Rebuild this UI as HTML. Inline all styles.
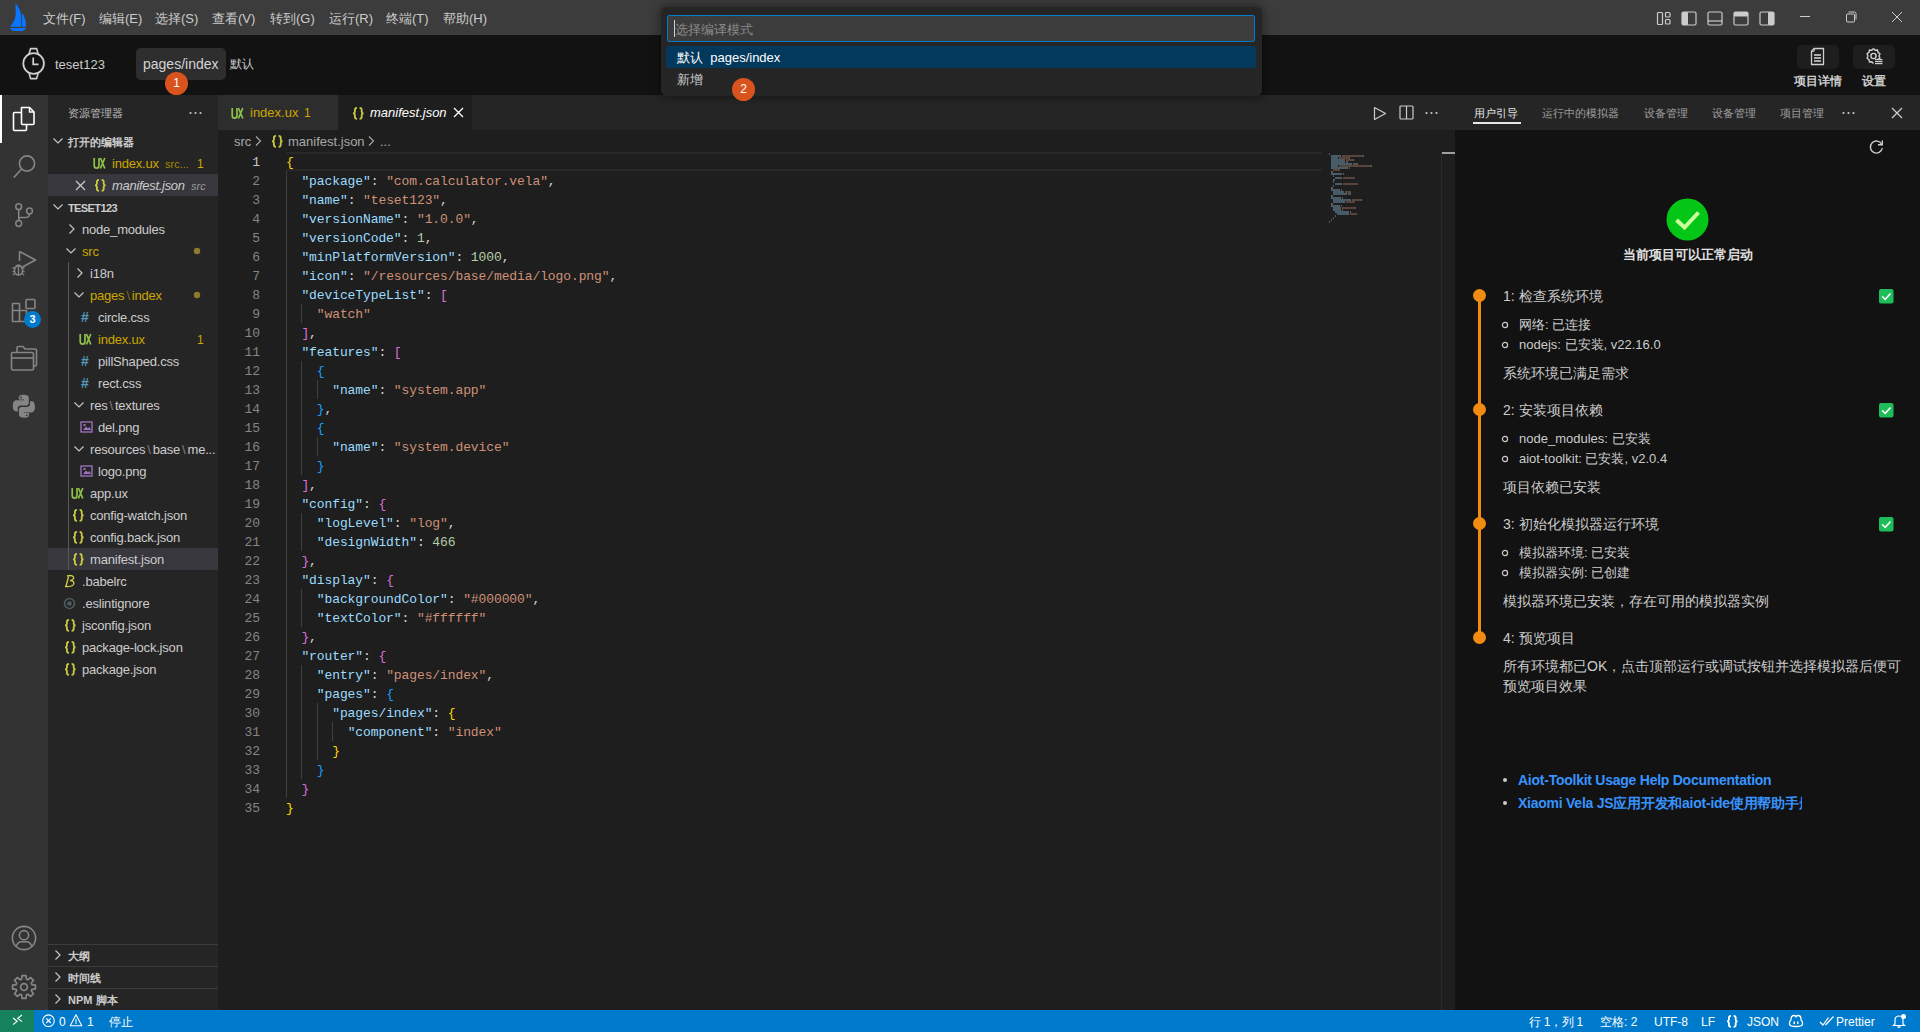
<!DOCTYPE html><html><head><meta charset="utf-8"><style>
*{margin:0;padding:0;box-sizing:border-box}
html,body{width:1920px;height:1032px;overflow:hidden;background:#1e1e1e;font-family:"Liberation Sans",sans-serif;font-size:13px;color:#cccccc}
.a{position:absolute;white-space:nowrap}
svg.i{position:absolute;overflow:visible}
.menu{top:10px;color:#cccccc;font-size:13px}
.badge{position:absolute;width:23px;height:23px;border-radius:50%;background:#d9531e;color:#fff;font-size:12px;text-align:center;line-height:23px}
.code{font-family:"Liberation Mono",monospace;font-size:13px;letter-spacing:-0.1px;line-height:19px;color:#d4d4d4}
.ln{font-family:"Liberation Mono",monospace;font-size:13px;line-height:19px;color:#858585;text-align:right;width:40px}
.k{color:#9cdcfe}.s{color:#ce9178}.n{color:#b5cea8}.b1{color:#ffd700}.b2{color:#da70d6}.b3{color:#179fff}
.row{height:22px;line-height:22px}
.guide{position:absolute;width:1px;background:#404040}
</style></head><body>
<div class="a" style="left:0px;top:0px;width:1920px;height:35px;background:#3c3c3c;"></div>
<div class="a" style="left:0px;top:35px;width:1920px;height:60px;background:#121212;"></div>
<div class="a" style="left:0px;top:95px;width:48px;height:915px;background:#333333;"></div>
<div class="a" style="left:48px;top:95px;width:170px;height:915px;background:#252526;"></div>
<div class="a" style="left:218px;top:95px;width:1237px;height:35px;background:#252526;"></div>
<div class="a" style="left:218px;top:130px;width:1237px;height:880px;background:#1e1e1e;"></div>
<div class="a" style="left:1455px;top:95px;width:465px;height:35px;background:#252526;"></div>
<div class="a" style="left:1455px;top:130px;width:465px;height:880px;background:#121212;"></div>
<div class="a" style="left:0px;top:1010px;width:1920px;height:22px;background:#007acc;"></div>
<div class="a" style="left:0px;top:1010px;width:34px;height:22px;background:#16825d;"></div>
<svg class="i" style="left:8px;top:2px;" width="22" height="32" viewBox="0 0 22 32">
<path d="M7.4 1 C10 4 12.3 8 13.1 12.5 L13.1 24.7 L2 24.7 C5.5 21 7.6 17 7.7 11 C7.8 7 7.5 4 7.4 1 Z" fill="#0a75ff"/>
<path d="M13.9 11.2 C16.6 14 18 18 18 24.7 L13.9 24.7 Z" fill="#0a75ff"/>
<path d="M2 25.9 L18 25.9 C17.4 28.3 15 29 10 29 C5 29 2.6 28.3 2 25.9 Z" fill="#0a75ff"/>
</svg>
<div class="a" style="left:43px;top:11px;color:#cccccc;font-size:13px;line-height:16px">文件(F)</div>
<div class="a" style="left:99px;top:11px;color:#cccccc;font-size:13px;line-height:16px">编辑(E)</div>
<div class="a" style="left:155px;top:11px;color:#cccccc;font-size:13px;line-height:16px">选择(S)</div>
<div class="a" style="left:212px;top:11px;color:#cccccc;font-size:13px;line-height:16px">查看(V)</div>
<div class="a" style="left:270px;top:11px;color:#cccccc;font-size:13px;line-height:16px">转到(G)</div>
<div class="a" style="left:329px;top:11px;color:#cccccc;font-size:13px;line-height:16px">运行(R)</div>
<div class="a" style="left:386px;top:11px;color:#cccccc;font-size:13px;line-height:16px">终端(T)</div>
<div class="a" style="left:443px;top:11px;color:#cccccc;font-size:13px;line-height:16px">帮助(H)</div>
<svg class="i" style="left:1656px;top:11px;" width="16" height="15" viewBox="0 0 16 15"><rect x="1.5" y="1.5" width="5" height="12" rx="1" fill="none" stroke="#cccccc" stroke-width="1.2"/>
<rect x="9.5" y="1.5" width="4.5" height="4.5" rx="1" fill="none" stroke="#cccccc" stroke-width="1.2"/>
<rect x="9.5" y="8.5" width="4.5" height="4.5" rx="1" fill="none" stroke="#cccccc" stroke-width="1.2"/></svg>
<svg class="i" style="left:1681px;top:11px;" width="16" height="15" viewBox="0 0 16 15"><rect x="1" y="1" width="14" height="13" rx="1.5" fill="none" stroke="#cccccc" stroke-width="1.2"/><rect x="1" y="1" width="6" height="13" rx="1" fill="#cccccc"/></svg>
<svg class="i" style="left:1707px;top:11px;" width="16" height="15" viewBox="0 0 16 15"><rect x="1" y="1" width="14" height="13" rx="1.5" fill="none" stroke="#cccccc" stroke-width="1.2"/><line x1="1" y1="10" x2="15" y2="10" stroke="#cccccc" stroke-width="1.2"/></svg>
<svg class="i" style="left:1733px;top:11px;" width="16" height="15" viewBox="0 0 16 15"><rect x="1" y="1" width="14" height="13" rx="1.5" fill="none" stroke="#cccccc" stroke-width="1.2"/><rect x="1" y="1" width="14" height="4.5" rx="1" fill="#cccccc"/></svg>
<svg class="i" style="left:1759px;top:11px;" width="16" height="15" viewBox="0 0 16 15"><rect x="1" y="1" width="14" height="13" rx="1.5" fill="none" stroke="#cccccc" stroke-width="1.2"/><rect x="9" y="1" width="6" height="13" rx="1" fill="#cccccc"/></svg>
<svg class="i" style="left:1799px;top:10px;" width="13" height="13" viewBox="0 0 13 13"><line x1="1" y1="6.5" x2="11" y2="6.5" stroke="#cccccc" stroke-width="1"/></svg>
<svg class="i" style="left:1845px;top:11px;" width="13" height="13" viewBox="0 0 13 13"><rect x="1.5" y="3" width="8" height="8" rx="1" fill="none" stroke="#cccccc" stroke-width="1"/><path d="M3.5 1 H9.5 Q11 1 11 2.5 V8.5" fill="none" stroke="#cccccc" stroke-width="1"/></svg>
<svg class="i" style="left:1891px;top:11px;" width="12" height="12" viewBox="0 0 12 12"><path d="M1 1 L11 11 M11 1 L1 11" stroke="#cccccc" stroke-width="1"/></svg>
<svg class="i" style="left:21px;top:47px;" width="26" height="34" viewBox="0 0 26 34"><circle cx="12.6" cy="16.5" r="10.3" fill="none" stroke="#cfcfcf" stroke-width="1.8"/>
<path d="M8 7 L9.6 1.6 H15.6 L17.2 7" fill="none" stroke="#cfcfcf" stroke-width="1.6" stroke-linejoin="round"/>
<path d="M8 26 L9.6 31.6 H15.6 L17.2 26" fill="none" stroke="#cfcfcf" stroke-width="1.6" stroke-linejoin="round"/>
<path d="M12.2 10.5 V17.3 H17.5" fill="none" stroke="#cfcfcf" stroke-width="1.7"/></svg>
<div class="a" style="left:55px;top:57px;font-size:13px;line-height:15px;color:#cccccc">teset123</div>
<div class="a" style="left:136px;top:48px;width:90px;height:32px;background:#2e2e2e;border-radius:5px"></div>
<div class="a" style="left:143px;top:56px;font-size:14px;line-height:16px;color:#d4d4d4">pages/index</div>
<div class="a" style="left:230px;top:57px;font-size:12px;line-height:15px;color:#cccccc">默认</div>
<div class="badge" style="left:165px;top:72px">1</div>
<div class="a" style="left:1797px;top:45px;width:42px;height:24px;background:#1e1e1e;border-radius:5px"></div>
<div class="a" style="left:1853px;top:45px;width:42px;height:24px;background:#1e1e1e;border-radius:5px"></div>
<svg class="i" style="left:1810px;top:47px;" width="16" height="20" viewBox="0 0 16 20"><path d="M4.2 1.5 H13.5 V17.5 H1.5 V4.2 Z" fill="none" stroke="#cfcfcf" stroke-width="1.3" stroke-linejoin="round"/>
<path d="M1.5 4.2 L4.2 4.2 L4.2 1.5" fill="none" stroke="#cfcfcf" stroke-width="1"/>
<rect x="4" y="7.2" width="7" height="1.6" fill="#cfcfcf"/><rect x="4" y="10.2" width="7" height="1.6" fill="#cfcfcf"/><rect x="4" y="13.2" width="7" height="1.6" fill="#cfcfcf"/></svg>
<svg class="i" style="left:1865px;top:47px;" width="20" height="20" viewBox="0 0 20 20"><path d="M8.5 1.5 L10.2 3.2 L12.6 3 L13 5.4 L15 6.8 L14 9 L15 11 L13 12.3" fill="none" stroke="#cfcfcf" stroke-width="1.4" stroke-linejoin="round"/>
<path d="M8.5 1.5 L6.8 3.2 L4.4 3 L4 5.4 L2 6.8 L3 9 L2 11.2 L4 12.6 L4.4 15 L6.8 14.8 L8.5 16.5" fill="none" stroke="#cfcfcf" stroke-width="1.4" stroke-linejoin="round"/>
<circle cx="8.5" cy="9" r="2.6" fill="none" stroke="#cfcfcf" stroke-width="1.4"/>
<rect x="10" y="12" width="7.5" height="1.2" fill="#cfcfcf"/><rect x="10" y="14" width="7.5" height="1.2" fill="#cfcfcf"/><rect x="10" y="16" width="7.5" height="1.2" fill="#cfcfcf"/></svg>
<div class="a" style="left:1794px;top:74px;font-size:12px;line-height:14px;color:#cccccc;font-weight:bold">项目详情</div>
<div class="a" style="left:1862px;top:74px;font-size:12px;line-height:14px;color:#cccccc;font-weight:bold">设置</div>
<div class="a" style="left:0px;top:95px;width:2px;height:48px;background:#ffffff;"></div>
<svg class="i" style="left:12px;top:106px;" width="24" height="26" viewBox="0 0 24 26"><path d="M9.5 1.5 H17.5 L22 6 V17.5 Q22 18.5 21 18.5 H10.5 Q9.5 18.5 9.5 17.5 Z" fill="none" stroke="#fff" stroke-width="1.6" stroke-linejoin="round"/>
<path d="M17.5 1.5 V6 H22" fill="none" stroke="#fff" stroke-width="1.4"/>
<path d="M9.5 6.5 H2.5 Q1.5 6.5 1.5 7.5 V23.5 Q1.5 24.5 2.5 24.5 H13.5 Q14.5 24.5 14.5 23.5 V18.5" fill="none" stroke="#fff" stroke-width="1.6"/></svg>
<svg class="i" style="left:12px;top:154px;" width="26" height="26" viewBox="0 0 26 26"><circle cx="15" cy="9.5" r="7.6" fill="none" stroke="#858585" stroke-width="1.6"/><line x1="9.6" y1="15" x2="1.8" y2="23.5" stroke="#858585" stroke-width="1.8"/></svg>
<svg class="i" style="left:14px;top:202px;" width="20" height="26" viewBox="0 0 20 26"><circle cx="4.7" cy="4.7" r="2.9" fill="none" stroke="#858585" stroke-width="1.5"/>
<circle cx="15.5" cy="9" r="2.9" fill="none" stroke="#858585" stroke-width="1.5"/>
<circle cx="4.7" cy="21.5" r="2.9" fill="none" stroke="#858585" stroke-width="1.5"/>
<path d="M4.7 7.6 V18.6 M15.5 11.9 Q15.5 15.5 11 15.5 H7 Q4.7 15.5 4.7 17.5" fill="none" stroke="#858585" stroke-width="1.5"/></svg>
<svg class="i" style="left:11px;top:249px;" width="28" height="28" viewBox="0 0 28 28"><path d="M8.5 2.5 L24.5 11 L11.5 18" fill="none" stroke="#858585" stroke-width="1.6" stroke-linejoin="round"/>
<path d="M8.5 2.5 V12" fill="none" stroke="#858585" stroke-width="1.6"/>
<ellipse cx="7.5" cy="21.5" rx="4" ry="4.5" fill="none" stroke="#858585" stroke-width="1.5"/>
<path d="M4.5 17.5 Q7.5 14.5 10.5 17.5 M1.5 19 H4 M11 19 H13.5 M1.5 22.5 H3.5 M11.5 22.5 H13.5 M1.8 26 L4 24.5 M13.2 26 L11 24.5 M7.5 18 V26" fill="none" stroke="#858585" stroke-width="1.3"/></svg>
<svg class="i" style="left:11px;top:298px;" width="26" height="26" viewBox="0 0 26 26"><path d="M1.5 5.5 H8.5 V12.5 H15.5 V23.5 H1.5 Z M1.5 12.5 H8.5 V23.5" fill="none" stroke="#858585" stroke-width="1.6" stroke-linejoin="round"/>
<rect x="15" y="1.5" width="9" height="9" rx="1" fill="none" stroke="#858585" stroke-width="1.6"/></svg>
<div class="a" style="left:24px;top:311px;width:17px;height:17px;border-radius:50%;background:#007acc;color:#fff;font-size:11px;font-weight:bold;text-align:center;line-height:17px">3</div>
<svg class="i" style="left:10px;top:345px;" width="28" height="27" viewBox="0 0 28 27"><path d="M1.5 9 Q1.5 7.5 3 7.5 H22 Q23.5 7.5 23.5 9 V23.5 Q23.5 25 22 25 H3 Q1.5 25 1.5 23.5 Z" fill="none" stroke="#858585" stroke-width="1.6"/>
<path d="M1.5 13 H23.5" fill="none" stroke="#858585" stroke-width="1.6"/>
<path d="M7 7.5 V3 Q7 1.5 8.5 1.5 H13 L15 4 H25 Q26.5 4 26.5 5.5 V19.5 Q26.5 21 25 21 H23.5" fill="none" stroke="#858585" stroke-width="1.6"/></svg>
<svg class="i" style="left:12px;top:394px;" width="24" height="25" viewBox="0 0 24 25"><path d="M11.8 0.8 C6.5 0.8 6.8 3.1 6.8 3.1 V5.5 H11.9 V6.2 H4.3 C4.3 6.2 0.8 5.8 0.8 11.8 C0.8 17.6 3.9 17.4 3.9 17.4 H5.8 V14.6 C5.8 14.6 5.7 11.6 8.8 11.6 H13.9 C13.9 11.6 16.8 11.6 16.8 8.8 V4 C16.8 4 17.2 0.8 11.8 0.8 Z M9 2.4 A0.9 0.9 0 1 1 9 4.2 A0.9 0.9 0 1 1 9 2.4 Z" fill="#858585"/>
<path d="M12 23.8 C17.3 23.8 17 21.5 17 21.5 V19.1 H11.9 V18.4 H19.5 C19.5 18.4 23 18.8 23 12.8 C23 7 19.9 7.2 19.9 7.2 H18 V10 C18 10 18.1 13 15 13 H9.9 C9.9 13 7 13 7 15.8 V20.6 C7 20.6 6.6 23.8 12 23.8 Z M14.8 22.2 A0.9 0.9 0 1 1 14.8 20.4 A0.9 0.9 0 1 1 14.8 22.2 Z" fill="#858585"/></svg>
<svg class="i" style="left:10px;top:924px;" width="28" height="28" viewBox="0 0 28 28"><circle cx="14" cy="14" r="11.6" fill="none" stroke="#858585" stroke-width="1.6"/><circle cx="14" cy="11.2" r="4.6" fill="none" stroke="#858585" stroke-width="1.6"/>
<path d="M6.3 22.6 Q7.5 17.8 12 17.8 H16 Q20.5 17.8 21.7 22.6" fill="none" stroke="#858585" stroke-width="1.6"/></svg>
<svg class="i" style="left:10px;top:972.5px;" width="28" height="28" viewBox="0 0 28 28"><path d="M21.83 11.58 L25.43 12.04 L25.43 15.96 L21.83 16.42 L21.25 17.83 L23.47 20.70 L20.70 23.47 L17.83 21.25 L16.42 21.83 L15.96 25.43 L12.04 25.43 L11.58 21.83 L10.17 21.25 L7.30 23.47 L4.53 20.70 L6.75 17.83 L6.17 16.42 L2.57 15.96 L2.57 12.04 L6.17 11.58 L6.75 10.17 L4.53 7.30 L7.30 4.53 L10.17 6.75 L11.58 6.17 L12.04 2.57 L15.96 2.57 L16.42 6.17 L17.83 6.75 L20.70 4.53 L23.47 7.30 L21.25 10.17 Z" fill="none" stroke="#858585" stroke-width="1.7" stroke-linejoin="round"/><circle cx="14" cy="14" r="3.4" fill="none" stroke="#858585" stroke-width="1.7"/></svg>
<div class="a" style="left:68px;top:106px;font-size:11px;line-height:15px;color:#bbbbbb">资源管理器</div>
<svg class="i" style="left:189px;top:111px;" width="14" height="4" viewBox="0 0 14 4"><circle cx="1.5" cy="2" r="1.1" fill="#c5c5c5"/><circle cx="6.5" cy="2" r="1.1" fill="#c5c5c5"/><circle cx="11.5" cy="2" r="1.1" fill="#c5c5c5"/></svg>
<svg class="i" style="left:52px;top:136px;" width="12" height="10" viewBox="0 0 12 10"><path d="M1.5 2.5 L6 7 L10.5 2.5" fill="none" stroke="#c5c5c5" stroke-width="1.2"/></svg>
<div class="a" style="left:68px;top:135px;font-size:11px;line-height:15px;color:#cccccc;font-weight:bold">打开的编辑器</div>
<svg class="i" style="left:93px;top:157px;" width="13" height="13" viewBox="0 0 13 13"><path d="M1.2 1 V8.2 Q1.2 11.2 3.6 11.2 Q6 11.2 6 8.2 V1" fill="none" stroke="#8dc149" stroke-width="1.7"/><path d="M7.4 1 L11.8 11.5 M11.8 1 L7.4 11.5" fill="none" stroke="#8dc149" stroke-width="1.7"/></svg>
<div class="a" style="left:112px;top:156px;font-size:13px;line-height:16px;letter-spacing:-0.2px;color:#cca700">index.ux</div>
<div class="a" style="left:165px;top:157px;font-size:11px;line-height:15px;color:#a38a00">src...</div>
<div class="a" style="left:197px;top:156px;font-size:12px;line-height:16px;color:#cca700">1</div>
<div class="a" style="left:48px;top:174px;width:170px;height:22px;background:#37373d;"></div>
<svg class="i" style="left:75px;top:180px;" width="11" height="11" viewBox="0 0 11 11"><path d="M1 1 L10 10 M10 1 L1 10" stroke="#cccccc" stroke-width="1.2"/></svg>
<svg class="i" style="left:93px;top:179px;" width="15" height="13" viewBox="0 0 15 13"><path d="M6 0.9 Q3.9 0.9 3.9 3 V4.8 Q3.9 6 2.2 6.3 Q3.9 6.6 3.9 7.8 V9.7 Q3.9 11.8 6 11.8 M8.6 0.9 Q10.7 0.9 10.7 3 V4.8 Q10.7 6 12.4 6.3 Q10.7 6.6 10.7 7.8 V9.7 Q10.7 11.8 8.6 11.8" fill="none" stroke="#cbcb41" stroke-width="1.8"/></svg>
<div class="a" style="left:112px;top:178px;font-size:13px;line-height:16px;color:#cccccc;font-style:italic;letter-spacing:-0.3px">manifest.json</div>
<div class="a" style="left:191px;top:179px;font-size:11px;line-height:15px;color:#999999;font-style:italic">src</div>
<svg class="i" style="left:52px;top:202px;" width="12" height="10" viewBox="0 0 12 10"><path d="M1.5 2.5 L6 7 L10.5 2.5" fill="none" stroke="#c5c5c5" stroke-width="1.2"/></svg>
<div class="a" style="left:68px;top:201px;font-size:11px;line-height:15px;color:#cccccc;font-weight:bold;letter-spacing:-0.6px">TESET123</div>
<svg class="i" style="left:67px;top:223px;" width="10" height="12" viewBox="0 0 10 12"><path d="M2.5 1.5 L7 6 L2.5 10.5" fill="none" stroke="#c5c5c5" stroke-width="1.2"/></svg>
<div class="a" style="left:82px;top:222px;font-size:13px;line-height:16px;color:#cccccc;letter-spacing:-0.2px">node_modules</div>
<svg class="i" style="left:65px;top:246px;" width="12" height="10" viewBox="0 0 12 10"><path d="M1.5 2.5 L6 7 L10.5 2.5" fill="none" stroke="#c5c5c5" stroke-width="1.2"/></svg>
<div class="a" style="left:82px;top:244px;font-size:13px;line-height:16px;color:#cca700;letter-spacing:-0.2px">src</div>
<svg class="i" style="left:193px;top:247px;" width="8" height="8" viewBox="0 0 8 8"><circle cx="4" cy="4" r="3.2" fill="#8b7b2b"/></svg>
<div class="a" style="left:68px;top:262px;width:1px;height:286px;background:#585858;"></div>
<svg class="i" style="left:75px;top:267px;" width="10" height="12" viewBox="0 0 10 12"><path d="M2.5 1.5 L7 6 L2.5 10.5" fill="none" stroke="#c5c5c5" stroke-width="1.2"/></svg>
<div class="a" style="left:90px;top:266px;font-size:13px;line-height:16px;color:#cccccc;letter-spacing:-0.2px">i18n</div>
<svg class="i" style="left:73px;top:290px;" width="12" height="10" viewBox="0 0 12 10"><path d="M1.5 2.5 L6 7 L10.5 2.5" fill="none" stroke="#c5c5c5" stroke-width="1.2"/></svg>
<div class="a" style="left:90px;top:288px;font-size:13px;line-height:16px;color:#cca700;letter-spacing:-0.2px">pages<span style="opacity:0.55;margin:0 2px">\</span>index</div>
<svg class="i" style="left:193px;top:291px;" width="8" height="8" viewBox="0 0 8 8"><circle cx="4" cy="4" r="3.2" fill="#8b7b2b"/></svg>
<div class="a" style="left:81px;top:309px;font-family:'Liberation Sans';font-size:14px;line-height:16px;color:#519aba;font-weight:bold">#</div>
<div class="a" style="left:98px;top:310px;font-size:13px;line-height:16px;color:#cccccc;letter-spacing:-0.2px">circle.css</div>
<svg class="i" style="left:79px;top:333px;" width="13" height="13" viewBox="0 0 13 13"><path d="M1.2 1 V8.2 Q1.2 11.2 3.6 11.2 Q6 11.2 6 8.2 V1" fill="none" stroke="#8dc149" stroke-width="1.7"/><path d="M7.4 1 L11.8 11.5 M11.8 1 L7.4 11.5" fill="none" stroke="#8dc149" stroke-width="1.7"/></svg>
<div class="a" style="left:98px;top:332px;font-size:13px;line-height:16px;color:#cca700;letter-spacing:-0.2px">index.ux</div>
<div class="a" style="left:197px;top:332px;font-size:12px;line-height:16px;color:#cca700">1</div>
<div class="a" style="left:81px;top:353px;font-family:'Liberation Sans';font-size:14px;line-height:16px;color:#519aba;font-weight:bold">#</div>
<div class="a" style="left:98px;top:354px;font-size:13px;line-height:16px;color:#cccccc;letter-spacing:-0.2px">pillShaped.css</div>
<div class="a" style="left:81px;top:375px;font-family:'Liberation Sans';font-size:14px;line-height:16px;color:#519aba;font-weight:bold">#</div>
<div class="a" style="left:98px;top:376px;font-size:13px;line-height:16px;color:#cccccc;letter-spacing:-0.2px">rect.css</div>
<svg class="i" style="left:73px;top:400px;" width="12" height="10" viewBox="0 0 12 10"><path d="M1.5 2.5 L6 7 L10.5 2.5" fill="none" stroke="#c5c5c5" stroke-width="1.2"/></svg>
<div class="a" style="left:90px;top:398px;font-size:13px;line-height:16px;color:#cccccc;letter-spacing:-0.2px">res<span style="opacity:0.55;margin:0 2px">\</span>textures</div>
<svg class="i" style="left:80px;top:421px;" width="13" height="12" viewBox="0 0 13 12"><rect x="1" y="1" width="11" height="10" fill="none" stroke="#a074c4" stroke-width="1.3"/><path d="M3 9 L6 5.5 L8 7.5 L9.5 6 L11 9 Z" fill="#a074c4"/><rect x="3.5" y="3" width="2" height="2" fill="#a074c4"/></svg>
<div class="a" style="left:98px;top:420px;font-size:13px;line-height:16px;color:#cccccc;letter-spacing:-0.2px">del.png</div>
<svg class="i" style="left:73px;top:444px;" width="12" height="10" viewBox="0 0 12 10"><path d="M1.5 2.5 L6 7 L10.5 2.5" fill="none" stroke="#c5c5c5" stroke-width="1.2"/></svg>
<div class="a" style="left:90px;top:442px;font-size:13px;line-height:16px;color:#cccccc;letter-spacing:-0.2px">resources<span style="opacity:0.55;margin:0 2px">\</span>base<span style="opacity:0.55;margin:0 2px">\</span>me...</div>
<svg class="i" style="left:80px;top:465px;" width="13" height="12" viewBox="0 0 13 12"><rect x="1" y="1" width="11" height="10" fill="none" stroke="#a074c4" stroke-width="1.3"/><path d="M3 9 L6 5.5 L8 7.5 L9.5 6 L11 9 Z" fill="#a074c4"/><rect x="3.5" y="3" width="2" height="2" fill="#a074c4"/></svg>
<div class="a" style="left:98px;top:464px;font-size:13px;line-height:16px;color:#cccccc;letter-spacing:-0.2px">logo.png</div>
<svg class="i" style="left:71px;top:487px;" width="13" height="13" viewBox="0 0 13 13"><path d="M1.2 1 V8.2 Q1.2 11.2 3.6 11.2 Q6 11.2 6 8.2 V1" fill="none" stroke="#8dc149" stroke-width="1.7"/><path d="M7.4 1 L11.8 11.5 M11.8 1 L7.4 11.5" fill="none" stroke="#8dc149" stroke-width="1.7"/></svg>
<div class="a" style="left:90px;top:486px;font-size:13px;line-height:16px;color:#cccccc;letter-spacing:-0.2px">app.ux</div>
<svg class="i" style="left:71px;top:509px;" width="15" height="13" viewBox="0 0 15 13"><path d="M6 0.9 Q3.9 0.9 3.9 3 V4.8 Q3.9 6 2.2 6.3 Q3.9 6.6 3.9 7.8 V9.7 Q3.9 11.8 6 11.8 M8.6 0.9 Q10.7 0.9 10.7 3 V4.8 Q10.7 6 12.4 6.3 Q10.7 6.6 10.7 7.8 V9.7 Q10.7 11.8 8.6 11.8" fill="none" stroke="#cbcb41" stroke-width="1.8"/></svg>
<div class="a" style="left:90px;top:508px;font-size:13px;line-height:16px;color:#cccccc;letter-spacing:-0.2px">config-watch.json</div>
<svg class="i" style="left:71px;top:531px;" width="15" height="13" viewBox="0 0 15 13"><path d="M6 0.9 Q3.9 0.9 3.9 3 V4.8 Q3.9 6 2.2 6.3 Q3.9 6.6 3.9 7.8 V9.7 Q3.9 11.8 6 11.8 M8.6 0.9 Q10.7 0.9 10.7 3 V4.8 Q10.7 6 12.4 6.3 Q10.7 6.6 10.7 7.8 V9.7 Q10.7 11.8 8.6 11.8" fill="none" stroke="#cbcb41" stroke-width="1.8"/></svg>
<div class="a" style="left:90px;top:530px;font-size:13px;line-height:16px;color:#cccccc;letter-spacing:-0.2px">config.back.json</div>
<div class="a" style="left:48px;top:548px;width:170px;height:22px;background:#37373d;"></div>
<div class="a" style="left:68px;top:548px;width:1px;height:22px;background:#585858;"></div>
<svg class="i" style="left:71px;top:553px;" width="15" height="13" viewBox="0 0 15 13"><path d="M6 0.9 Q3.9 0.9 3.9 3 V4.8 Q3.9 6 2.2 6.3 Q3.9 6.6 3.9 7.8 V9.7 Q3.9 11.8 6 11.8 M8.6 0.9 Q10.7 0.9 10.7 3 V4.8 Q10.7 6 12.4 6.3 Q10.7 6.6 10.7 7.8 V9.7 Q10.7 11.8 8.6 11.8" fill="none" stroke="#cbcb41" stroke-width="1.8"/></svg>
<div class="a" style="left:90px;top:552px;font-size:13px;line-height:16px;color:#cccccc;letter-spacing:-0.2px">manifest.json</div>
<svg class="i" style="left:63px;top:574px;" width="14" height="14" viewBox="0 0 14 14"><path d="M4 2 Q9 0.5 10.5 3 Q11.5 5.5 7 6.5 Q12 7 10.5 10.5 Q9 13 2 12.5 M5.5 2.5 L3 12.5" fill="none" stroke="#cbcb41" stroke-width="1.4"/></svg>
<div class="a" style="left:82px;top:574px;font-size:13px;line-height:16px;color:#cccccc;letter-spacing:-0.2px">.babelrc</div>
<svg class="i" style="left:63px;top:597px;" width="13" height="13" viewBox="0 0 13 13"><circle cx="6.5" cy="6.5" r="5" fill="none" stroke="#4d5a5e" stroke-width="1.6"/><circle cx="6.5" cy="6.5" r="2.3" fill="#4d5a5e"/></svg>
<div class="a" style="left:82px;top:596px;font-size:13px;line-height:16px;color:#cccccc;letter-spacing:-0.2px">.eslintignore</div>
<svg class="i" style="left:63px;top:619px;" width="15" height="13" viewBox="0 0 15 13"><path d="M6 0.9 Q3.9 0.9 3.9 3 V4.8 Q3.9 6 2.2 6.3 Q3.9 6.6 3.9 7.8 V9.7 Q3.9 11.8 6 11.8 M8.6 0.9 Q10.7 0.9 10.7 3 V4.8 Q10.7 6 12.4 6.3 Q10.7 6.6 10.7 7.8 V9.7 Q10.7 11.8 8.6 11.8" fill="none" stroke="#cbcb41" stroke-width="1.8"/></svg>
<div class="a" style="left:82px;top:618px;font-size:13px;line-height:16px;color:#cccccc;letter-spacing:-0.2px">jsconfig.json</div>
<svg class="i" style="left:63px;top:641px;" width="15" height="13" viewBox="0 0 15 13"><path d="M6 0.9 Q3.9 0.9 3.9 3 V4.8 Q3.9 6 2.2 6.3 Q3.9 6.6 3.9 7.8 V9.7 Q3.9 11.8 6 11.8 M8.6 0.9 Q10.7 0.9 10.7 3 V4.8 Q10.7 6 12.4 6.3 Q10.7 6.6 10.7 7.8 V9.7 Q10.7 11.8 8.6 11.8" fill="none" stroke="#cbcb41" stroke-width="1.8"/></svg>
<div class="a" style="left:82px;top:640px;font-size:13px;line-height:16px;color:#cccccc;letter-spacing:-0.2px">package-lock.json</div>
<svg class="i" style="left:63px;top:663px;" width="15" height="13" viewBox="0 0 15 13"><path d="M6 0.9 Q3.9 0.9 3.9 3 V4.8 Q3.9 6 2.2 6.3 Q3.9 6.6 3.9 7.8 V9.7 Q3.9 11.8 6 11.8 M8.6 0.9 Q10.7 0.9 10.7 3 V4.8 Q10.7 6 12.4 6.3 Q10.7 6.6 10.7 7.8 V9.7 Q10.7 11.8 8.6 11.8" fill="none" stroke="#cbcb41" stroke-width="1.8"/></svg>
<div class="a" style="left:82px;top:662px;font-size:13px;line-height:16px;color:#cccccc;letter-spacing:-0.2px">package.json</div>
<div class="a" style="left:48px;top:944px;width:170px;height:1px;background:#3c3c3c;"></div>
<div class="a" style="left:48px;top:966px;width:170px;height:1px;background:#3c3c3c;"></div>
<div class="a" style="left:48px;top:988px;width:170px;height:1px;background:#3c3c3c;"></div>
<svg class="i" style="left:53px;top:949px;" width="10" height="12" viewBox="0 0 10 12"><path d="M2.5 1.5 L7 6 L2.5 10.5" fill="none" stroke="#c5c5c5" stroke-width="1.2"/></svg>
<div class="a" style="left:68px;top:948px;font-size:11px;line-height:16px;color:#cccccc;font-weight:bold">大纲</div>
<svg class="i" style="left:53px;top:971px;" width="10" height="12" viewBox="0 0 10 12"><path d="M2.5 1.5 L7 6 L2.5 10.5" fill="none" stroke="#c5c5c5" stroke-width="1.2"/></svg>
<div class="a" style="left:68px;top:970px;font-size:11px;line-height:16px;color:#cccccc;font-weight:bold">时间线</div>
<svg class="i" style="left:53px;top:993px;" width="10" height="12" viewBox="0 0 10 12"><path d="M2.5 1.5 L7 6 L2.5 10.5" fill="none" stroke="#c5c5c5" stroke-width="1.2"/></svg>
<div class="a" style="left:68px;top:992px;font-size:11px;line-height:16px;color:#cccccc;font-weight:bold">NPM 脚本</div>
<div class="a" style="left:218px;top:95px;width:120px;height:35px;background:#2d2d2d;"></div>
<div class="a" style="left:338px;top:95px;width:134px;height:35px;background:#1e1e1e;"></div>
<svg class="i" style="left:231px;top:107px;" width="13" height="13" viewBox="0 0 13 13"><path d="M1.2 1 V8.2 Q1.2 11.2 3.6 11.2 Q6 11.2 6 8.2 V1" fill="none" stroke="#8dc149" stroke-width="1.7"/><path d="M7.4 1 L11.8 11.5 M11.8 1 L7.4 11.5" fill="none" stroke="#8dc149" stroke-width="1.7"/></svg>
<div class="a" style="left:250px;top:105px;font-size:13px;line-height:16px;color:#cca700">index.ux</div>
<div class="a" style="left:304px;top:105px;font-size:12px;line-height:16px;color:#cca700">1</div>
<svg class="i" style="left:351px;top:107px;" width="15" height="13" viewBox="0 0 15 13"><path d="M6 0.9 Q3.9 0.9 3.9 3 V4.8 Q3.9 6 2.2 6.3 Q3.9 6.6 3.9 7.8 V9.7 Q3.9 11.8 6 11.8 M8.6 0.9 Q10.7 0.9 10.7 3 V4.8 Q10.7 6 12.4 6.3 Q10.7 6.6 10.7 7.8 V9.7 Q10.7 11.8 8.6 11.8" fill="none" stroke="#cbcb41" stroke-width="1.8"/></svg>
<div class="a" style="left:370px;top:105px;font-size:13px;line-height:16px;color:#ffffff;font-style:italic">manifest.json</div>
<svg class="i" style="left:453px;top:107px;" width="11" height="11" viewBox="0 0 11 11"><path d="M1 1 L10 10 M10 1 L1 10" stroke="#ffffff" stroke-width="1.3"/></svg>
<svg class="i" style="left:1373px;top:106px;" width="14" height="15" viewBox="0 0 14 15"><path d="M1.5 1.5 L12.5 7.5 L1.5 13.5 Z" fill="none" stroke="#cccccc" stroke-width="1.2" stroke-linejoin="round"/></svg>
<svg class="i" style="left:1399px;top:105px;" width="15" height="15" viewBox="0 0 15 15"><rect x="1" y="1" width="13" height="13" rx="1" fill="none" stroke="#cccccc" stroke-width="1.2"/><line x1="7.5" y1="1" x2="7.5" y2="14" stroke="#cccccc" stroke-width="1.2"/></svg>
<svg class="i" style="left:1425px;top:111px;" width="14" height="4" viewBox="0 0 14 4"><circle cx="1.5" cy="2" r="1.1" fill="#cccccc"/><circle cx="6.5" cy="2" r="1.1" fill="#cccccc"/><circle cx="11.5" cy="2" r="1.1" fill="#cccccc"/></svg>
<div class="a" style="left:234px;top:134px;font-size:13px;line-height:16px;color:#a9a9a9">src</div>
<svg class="i" style="left:254px;top:135px;" width="9" height="12" viewBox="0 0 9 12"><path d="M2 1.5 L6.5 6 L2 10.5" fill="none" stroke="#a9a9a9" stroke-width="1.1"/></svg>
<svg class="i" style="left:270px;top:135px;" width="15" height="13" viewBox="0 0 15 13"><path d="M6 0.9 Q3.9 0.9 3.9 3 V4.8 Q3.9 6 2.2 6.3 Q3.9 6.6 3.9 7.8 V9.7 Q3.9 11.8 6 11.8 M8.6 0.9 Q10.7 0.9 10.7 3 V4.8 Q10.7 6 12.4 6.3 Q10.7 6.6 10.7 7.8 V9.7 Q10.7 11.8 8.6 11.8" fill="none" stroke="#cbcb41" stroke-width="1.8"/></svg>
<div class="a" style="left:288px;top:134px;font-size:13px;line-height:16px;color:#a9a9a9">manifest.json</div>
<svg class="i" style="left:367px;top:135px;" width="9" height="12" viewBox="0 0 9 12"><path d="M2 1.5 L6.5 6 L2 10.5" fill="none" stroke="#a9a9a9" stroke-width="1.1"/></svg>
<div class="a" style="left:380px;top:134px;font-size:13px;line-height:16px;color:#a9a9a9">...</div>
<div class="a" style="left:286px;top:152px;width:1036px;height:2px;background:#282828;"></div>
<div class="a" style="left:286px;top:169px;width:1036px;height:2px;background:#282828;"></div>
<div class="guide" style="left:286.0px;top:171px;height:627px;background:#404040"></div>
<div class="guide" style="left:301.4px;top:304px;height:19px;background:#404040"></div>
<div class="guide" style="left:301.4px;top:361px;height:114px;background:#404040"></div>
<div class="guide" style="left:301.4px;top:513px;height:38px;background:#404040"></div>
<div class="guide" style="left:301.4px;top:589px;height:38px;background:#404040"></div>
<div class="guide" style="left:301.4px;top:665px;height:114px;background:#404040"></div>
<div class="guide" style="left:316.8px;top:380px;height:19px;background:#404040"></div>
<div class="guide" style="left:316.8px;top:437px;height:19px;background:#404040"></div>
<div class="guide" style="left:316.8px;top:703px;height:57px;background:#404040"></div>
<div class="guide" style="left:332.2px;top:722px;height:19px;background:#404040"></div>
<div class="a code" style="left:286px;top:153px;white-space:pre"><span class="b1">{</span>
  <span class="k">&quot;package&quot;</span>: <span class="s">&quot;com.calculator.vela&quot;</span>,
  <span class="k">&quot;name&quot;</span>: <span class="s">&quot;teset123&quot;</span>,
  <span class="k">&quot;versionName&quot;</span>: <span class="s">&quot;1.0.0&quot;</span>,
  <span class="k">&quot;versionCode&quot;</span>: <span class="n">1</span>,
  <span class="k">&quot;minPlatformVersion&quot;</span>: <span class="n">1000</span>,
  <span class="k">&quot;icon&quot;</span>: <span class="s">&quot;/resources/base/media/logo.png&quot;</span>,
  <span class="k">&quot;deviceTypeList&quot;</span>: <span class="b2">[</span>
    <span class="s">&quot;watch&quot;</span>
  <span class="b2">]</span>,
  <span class="k">&quot;features&quot;</span>: <span class="b2">[</span>
    <span class="b3">{</span>
      <span class="k">&quot;name&quot;</span>: <span class="s">&quot;system.app&quot;</span>
    <span class="b3">}</span>,
    <span class="b3">{</span>
      <span class="k">&quot;name&quot;</span>: <span class="s">&quot;system.device&quot;</span>
    <span class="b3">}</span>
  <span class="b2">]</span>,
  <span class="k">&quot;config&quot;</span>: <span class="b2">{</span>
    <span class="k">&quot;logLevel&quot;</span>: <span class="s">&quot;log&quot;</span>,
    <span class="k">&quot;designWidth&quot;</span>: <span class="n">466</span>
  <span class="b2">}</span>,
  <span class="k">&quot;display&quot;</span>: <span class="b2">{</span>
    <span class="k">&quot;backgroundColor&quot;</span>: <span class="s">&quot;#000000&quot;</span>,
    <span class="k">&quot;textColor&quot;</span>: <span class="s">&quot;#ffffff&quot;</span>
  <span class="b2">}</span>,
  <span class="k">&quot;router&quot;</span>: <span class="b2">{</span>
    <span class="k">&quot;entry&quot;</span>: <span class="s">&quot;pages/index&quot;</span>,
    <span class="k">&quot;pages&quot;</span>: <span class="b3">{</span>
      <span class="k">&quot;pages/index&quot;</span>: <span class="b1">{</span>
        <span class="k">&quot;component&quot;</span>: <span class="s">&quot;index&quot;</span>
      <span class="b1">}</span>
    <span class="b3">}</span>
  <span class="b2">}</span>
<span class="b1">}</span></div>
<div class="a ln" style="left:220px;top:153px;white-space:pre">1
2
3
4
5
6
7
8
9
10
11
12
13
14
15
16
17
18
19
20
21
22
23
24
25
26
27
28
29
30
31
32
33
34
35</div>
<div class="a ln" style="left:220px;top:153px;color:#c6c6c6;background:#1e1e1e;height:19px">1</div>
<svg class="i" style="left:1329px;top:153px;shape-rendering:crispEdges" width="120" height="72" viewBox="0 0 120 72"><rect x="0" y="0" width="1" height="2" fill="#d4d4d4" opacity="0.33"/><rect x="2" y="2" width="1" height="2" fill="#9cdcfe" opacity="0.33"/><rect x="3" y="2" width="1" height="2" fill="#9cdcfe" opacity="0.33"/><rect x="4" y="2" width="1" height="2" fill="#9cdcfe" opacity="0.33"/><rect x="5" y="2" width="1" height="2" fill="#9cdcfe" opacity="0.33"/><rect x="6" y="2" width="1" height="2" fill="#9cdcfe" opacity="0.33"/><rect x="7" y="2" width="1" height="2" fill="#9cdcfe" opacity="0.33"/><rect x="8" y="2" width="1" height="2" fill="#9cdcfe" opacity="0.33"/><rect x="9" y="2" width="1" height="2" fill="#9cdcfe" opacity="0.33"/><rect x="10" y="2" width="1" height="2" fill="#9cdcfe" opacity="0.33"/><rect x="11" y="2" width="1" height="2" fill="#d4d4d4" opacity="0.33"/><rect x="13" y="2" width="1" height="2" fill="#ce9178" opacity="0.33"/><rect x="14" y="2" width="1" height="2" fill="#ce9178" opacity="0.33"/><rect x="15" y="2" width="1" height="2" fill="#ce9178" opacity="0.33"/><rect x="16" y="2" width="1" height="2" fill="#ce9178" opacity="0.33"/><rect x="17" y="2" width="1" height="2" fill="#ce9178" opacity="0.33"/><rect x="18" y="2" width="1" height="2" fill="#ce9178" opacity="0.33"/><rect x="19" y="2" width="1" height="2" fill="#ce9178" opacity="0.33"/><rect x="20" y="2" width="1" height="2" fill="#ce9178" opacity="0.33"/><rect x="21" y="2" width="1" height="2" fill="#ce9178" opacity="0.33"/><rect x="22" y="2" width="1" height="2" fill="#ce9178" opacity="0.33"/><rect x="23" y="2" width="1" height="2" fill="#ce9178" opacity="0.33"/><rect x="24" y="2" width="1" height="2" fill="#ce9178" opacity="0.33"/><rect x="25" y="2" width="1" height="2" fill="#ce9178" opacity="0.33"/><rect x="26" y="2" width="1" height="2" fill="#ce9178" opacity="0.33"/><rect x="27" y="2" width="1" height="2" fill="#ce9178" opacity="0.33"/><rect x="28" y="2" width="1" height="2" fill="#ce9178" opacity="0.33"/><rect x="29" y="2" width="1" height="2" fill="#ce9178" opacity="0.33"/><rect x="30" y="2" width="1" height="2" fill="#ce9178" opacity="0.33"/><rect x="31" y="2" width="1" height="2" fill="#ce9178" opacity="0.33"/><rect x="32" y="2" width="1" height="2" fill="#ce9178" opacity="0.33"/><rect x="33" y="2" width="1" height="2" fill="#ce9178" opacity="0.33"/><rect x="34" y="2" width="1" height="2" fill="#d4d4d4" opacity="0.33"/><rect x="2" y="4" width="1" height="2" fill="#9cdcfe" opacity="0.33"/><rect x="3" y="4" width="1" height="2" fill="#9cdcfe" opacity="0.33"/><rect x="4" y="4" width="1" height="2" fill="#9cdcfe" opacity="0.33"/><rect x="5" y="4" width="1" height="2" fill="#9cdcfe" opacity="0.33"/><rect x="6" y="4" width="1" height="2" fill="#9cdcfe" opacity="0.33"/><rect x="7" y="4" width="1" height="2" fill="#9cdcfe" opacity="0.33"/><rect x="8" y="4" width="1" height="2" fill="#d4d4d4" opacity="0.33"/><rect x="10" y="4" width="1" height="2" fill="#ce9178" opacity="0.33"/><rect x="11" y="4" width="1" height="2" fill="#ce9178" opacity="0.33"/><rect x="12" y="4" width="1" height="2" fill="#ce9178" opacity="0.33"/><rect x="13" y="4" width="1" height="2" fill="#ce9178" opacity="0.33"/><rect x="14" y="4" width="1" height="2" fill="#ce9178" opacity="0.33"/><rect x="15" y="4" width="1" height="2" fill="#ce9178" opacity="0.33"/><rect x="16" y="4" width="1" height="2" fill="#ce9178" opacity="0.33"/><rect x="17" y="4" width="1" height="2" fill="#ce9178" opacity="0.33"/><rect x="18" y="4" width="1" height="2" fill="#ce9178" opacity="0.33"/><rect x="19" y="4" width="1" height="2" fill="#ce9178" opacity="0.33"/><rect x="20" y="4" width="1" height="2" fill="#d4d4d4" opacity="0.33"/><rect x="2" y="6" width="1" height="2" fill="#9cdcfe" opacity="0.33"/><rect x="3" y="6" width="1" height="2" fill="#9cdcfe" opacity="0.33"/><rect x="4" y="6" width="1" height="2" fill="#9cdcfe" opacity="0.33"/><rect x="5" y="6" width="1" height="2" fill="#9cdcfe" opacity="0.33"/><rect x="6" y="6" width="1" height="2" fill="#9cdcfe" opacity="0.33"/><rect x="7" y="6" width="1" height="2" fill="#9cdcfe" opacity="0.33"/><rect x="8" y="6" width="1" height="2" fill="#9cdcfe" opacity="0.33"/><rect x="9" y="6" width="1" height="2" fill="#9cdcfe" opacity="0.33"/><rect x="10" y="6" width="1" height="2" fill="#9cdcfe" opacity="0.33"/><rect x="11" y="6" width="1" height="2" fill="#9cdcfe" opacity="0.33"/><rect x="12" y="6" width="1" height="2" fill="#9cdcfe" opacity="0.33"/><rect x="13" y="6" width="1" height="2" fill="#9cdcfe" opacity="0.33"/><rect x="14" y="6" width="1" height="2" fill="#9cdcfe" opacity="0.33"/><rect x="15" y="6" width="1" height="2" fill="#d4d4d4" opacity="0.33"/><rect x="17" y="6" width="1" height="2" fill="#ce9178" opacity="0.33"/><rect x="18" y="6" width="1" height="2" fill="#ce9178" opacity="0.33"/><rect x="19" y="6" width="1" height="2" fill="#ce9178" opacity="0.33"/><rect x="20" y="6" width="1" height="2" fill="#ce9178" opacity="0.33"/><rect x="21" y="6" width="1" height="2" fill="#ce9178" opacity="0.33"/><rect x="22" y="6" width="1" height="2" fill="#ce9178" opacity="0.33"/><rect x="23" y="6" width="1" height="2" fill="#ce9178" opacity="0.33"/><rect x="24" y="6" width="1" height="2" fill="#d4d4d4" opacity="0.33"/><rect x="2" y="8" width="1" height="2" fill="#9cdcfe" opacity="0.33"/><rect x="3" y="8" width="1" height="2" fill="#9cdcfe" opacity="0.33"/><rect x="4" y="8" width="1" height="2" fill="#9cdcfe" opacity="0.33"/><rect x="5" y="8" width="1" height="2" fill="#9cdcfe" opacity="0.33"/><rect x="6" y="8" width="1" height="2" fill="#9cdcfe" opacity="0.33"/><rect x="7" y="8" width="1" height="2" fill="#9cdcfe" opacity="0.33"/><rect x="8" y="8" width="1" height="2" fill="#9cdcfe" opacity="0.33"/><rect x="9" y="8" width="1" height="2" fill="#9cdcfe" opacity="0.33"/><rect x="10" y="8" width="1" height="2" fill="#9cdcfe" opacity="0.33"/><rect x="11" y="8" width="1" height="2" fill="#9cdcfe" opacity="0.33"/><rect x="12" y="8" width="1" height="2" fill="#9cdcfe" opacity="0.33"/><rect x="13" y="8" width="1" height="2" fill="#9cdcfe" opacity="0.33"/><rect x="14" y="8" width="1" height="2" fill="#9cdcfe" opacity="0.33"/><rect x="15" y="8" width="1" height="2" fill="#d4d4d4" opacity="0.33"/><rect x="17" y="8" width="1" height="2" fill="#b5cea8" opacity="0.33"/><rect x="18" y="8" width="1" height="2" fill="#d4d4d4" opacity="0.33"/><rect x="2" y="10" width="1" height="2" fill="#9cdcfe" opacity="0.33"/><rect x="3" y="10" width="1" height="2" fill="#9cdcfe" opacity="0.33"/><rect x="4" y="10" width="1" height="2" fill="#9cdcfe" opacity="0.33"/><rect x="5" y="10" width="1" height="2" fill="#9cdcfe" opacity="0.33"/><rect x="6" y="10" width="1" height="2" fill="#9cdcfe" opacity="0.33"/><rect x="7" y="10" width="1" height="2" fill="#9cdcfe" opacity="0.33"/><rect x="8" y="10" width="1" height="2" fill="#9cdcfe" opacity="0.33"/><rect x="9" y="10" width="1" height="2" fill="#9cdcfe" opacity="0.33"/><rect x="10" y="10" width="1" height="2" fill="#9cdcfe" opacity="0.33"/><rect x="11" y="10" width="1" height="2" fill="#9cdcfe" opacity="0.33"/><rect x="12" y="10" width="1" height="2" fill="#9cdcfe" opacity="0.33"/><rect x="13" y="10" width="1" height="2" fill="#9cdcfe" opacity="0.33"/><rect x="14" y="10" width="1" height="2" fill="#9cdcfe" opacity="0.33"/><rect x="15" y="10" width="1" height="2" fill="#9cdcfe" opacity="0.33"/><rect x="16" y="10" width="1" height="2" fill="#9cdcfe" opacity="0.33"/><rect x="17" y="10" width="1" height="2" fill="#9cdcfe" opacity="0.33"/><rect x="18" y="10" width="1" height="2" fill="#9cdcfe" opacity="0.33"/><rect x="19" y="10" width="1" height="2" fill="#9cdcfe" opacity="0.33"/><rect x="20" y="10" width="1" height="2" fill="#9cdcfe" opacity="0.33"/><rect x="21" y="10" width="1" height="2" fill="#9cdcfe" opacity="0.33"/><rect x="22" y="10" width="1" height="2" fill="#d4d4d4" opacity="0.33"/><rect x="24" y="10" width="1" height="2" fill="#b5cea8" opacity="0.33"/><rect x="25" y="10" width="1" height="2" fill="#b5cea8" opacity="0.33"/><rect x="26" y="10" width="1" height="2" fill="#b5cea8" opacity="0.33"/><rect x="27" y="10" width="1" height="2" fill="#b5cea8" opacity="0.33"/><rect x="28" y="10" width="1" height="2" fill="#d4d4d4" opacity="0.33"/><rect x="2" y="12" width="1" height="2" fill="#9cdcfe" opacity="0.33"/><rect x="3" y="12" width="1" height="2" fill="#9cdcfe" opacity="0.33"/><rect x="4" y="12" width="1" height="2" fill="#9cdcfe" opacity="0.33"/><rect x="5" y="12" width="1" height="2" fill="#9cdcfe" opacity="0.33"/><rect x="6" y="12" width="1" height="2" fill="#9cdcfe" opacity="0.33"/><rect x="7" y="12" width="1" height="2" fill="#9cdcfe" opacity="0.33"/><rect x="8" y="12" width="1" height="2" fill="#d4d4d4" opacity="0.33"/><rect x="10" y="12" width="1" height="2" fill="#ce9178" opacity="0.33"/><rect x="11" y="12" width="1" height="2" fill="#ce9178" opacity="0.33"/><rect x="12" y="12" width="1" height="2" fill="#ce9178" opacity="0.33"/><rect x="13" y="12" width="1" height="2" fill="#ce9178" opacity="0.33"/><rect x="14" y="12" width="1" height="2" fill="#ce9178" opacity="0.33"/><rect x="15" y="12" width="1" height="2" fill="#ce9178" opacity="0.33"/><rect x="16" y="12" width="1" height="2" fill="#ce9178" opacity="0.33"/><rect x="17" y="12" width="1" height="2" fill="#ce9178" opacity="0.33"/><rect x="18" y="12" width="1" height="2" fill="#ce9178" opacity="0.33"/><rect x="19" y="12" width="1" height="2" fill="#ce9178" opacity="0.33"/><rect x="20" y="12" width="1" height="2" fill="#ce9178" opacity="0.33"/><rect x="21" y="12" width="1" height="2" fill="#ce9178" opacity="0.33"/><rect x="22" y="12" width="1" height="2" fill="#ce9178" opacity="0.33"/><rect x="23" y="12" width="1" height="2" fill="#ce9178" opacity="0.33"/><rect x="24" y="12" width="1" height="2" fill="#ce9178" opacity="0.33"/><rect x="25" y="12" width="1" height="2" fill="#ce9178" opacity="0.33"/><rect x="26" y="12" width="1" height="2" fill="#ce9178" opacity="0.33"/><rect x="27" y="12" width="1" height="2" fill="#ce9178" opacity="0.33"/><rect x="28" y="12" width="1" height="2" fill="#ce9178" opacity="0.33"/><rect x="29" y="12" width="1" height="2" fill="#ce9178" opacity="0.33"/><rect x="30" y="12" width="1" height="2" fill="#ce9178" opacity="0.33"/><rect x="31" y="12" width="1" height="2" fill="#ce9178" opacity="0.33"/><rect x="32" y="12" width="1" height="2" fill="#ce9178" opacity="0.33"/><rect x="33" y="12" width="1" height="2" fill="#ce9178" opacity="0.33"/><rect x="34" y="12" width="1" height="2" fill="#ce9178" opacity="0.33"/><rect x="35" y="12" width="1" height="2" fill="#ce9178" opacity="0.33"/><rect x="36" y="12" width="1" height="2" fill="#ce9178" opacity="0.33"/><rect x="37" y="12" width="1" height="2" fill="#ce9178" opacity="0.33"/><rect x="38" y="12" width="1" height="2" fill="#ce9178" opacity="0.33"/><rect x="39" y="12" width="1" height="2" fill="#ce9178" opacity="0.33"/><rect x="40" y="12" width="1" height="2" fill="#ce9178" opacity="0.33"/><rect x="41" y="12" width="1" height="2" fill="#ce9178" opacity="0.33"/><rect x="42" y="12" width="1" height="2" fill="#d4d4d4" opacity="0.33"/><rect x="2" y="14" width="1" height="2" fill="#9cdcfe" opacity="0.33"/><rect x="3" y="14" width="1" height="2" fill="#9cdcfe" opacity="0.33"/><rect x="4" y="14" width="1" height="2" fill="#9cdcfe" opacity="0.33"/><rect x="5" y="14" width="1" height="2" fill="#9cdcfe" opacity="0.33"/><rect x="6" y="14" width="1" height="2" fill="#9cdcfe" opacity="0.33"/><rect x="7" y="14" width="1" height="2" fill="#9cdcfe" opacity="0.33"/><rect x="8" y="14" width="1" height="2" fill="#9cdcfe" opacity="0.33"/><rect x="9" y="14" width="1" height="2" fill="#9cdcfe" opacity="0.33"/><rect x="10" y="14" width="1" height="2" fill="#9cdcfe" opacity="0.33"/><rect x="11" y="14" width="1" height="2" fill="#9cdcfe" opacity="0.33"/><rect x="12" y="14" width="1" height="2" fill="#9cdcfe" opacity="0.33"/><rect x="13" y="14" width="1" height="2" fill="#9cdcfe" opacity="0.33"/><rect x="14" y="14" width="1" height="2" fill="#9cdcfe" opacity="0.33"/><rect x="15" y="14" width="1" height="2" fill="#9cdcfe" opacity="0.33"/><rect x="16" y="14" width="1" height="2" fill="#9cdcfe" opacity="0.33"/><rect x="17" y="14" width="1" height="2" fill="#9cdcfe" opacity="0.33"/><rect x="18" y="14" width="1" height="2" fill="#d4d4d4" opacity="0.33"/><rect x="20" y="14" width="1" height="2" fill="#d4d4d4" opacity="0.33"/><rect x="4" y="16" width="1" height="2" fill="#ce9178" opacity="0.33"/><rect x="5" y="16" width="1" height="2" fill="#ce9178" opacity="0.33"/><rect x="6" y="16" width="1" height="2" fill="#ce9178" opacity="0.33"/><rect x="7" y="16" width="1" height="2" fill="#ce9178" opacity="0.33"/><rect x="8" y="16" width="1" height="2" fill="#ce9178" opacity="0.33"/><rect x="9" y="16" width="1" height="2" fill="#ce9178" opacity="0.33"/><rect x="10" y="16" width="1" height="2" fill="#ce9178" opacity="0.33"/><rect x="2" y="18" width="1" height="2" fill="#d4d4d4" opacity="0.33"/><rect x="3" y="18" width="1" height="2" fill="#d4d4d4" opacity="0.33"/><rect x="2" y="20" width="1" height="2" fill="#9cdcfe" opacity="0.33"/><rect x="3" y="20" width="1" height="2" fill="#9cdcfe" opacity="0.33"/><rect x="4" y="20" width="1" height="2" fill="#9cdcfe" opacity="0.33"/><rect x="5" y="20" width="1" height="2" fill="#9cdcfe" opacity="0.33"/><rect x="6" y="20" width="1" height="2" fill="#9cdcfe" opacity="0.33"/><rect x="7" y="20" width="1" height="2" fill="#9cdcfe" opacity="0.33"/><rect x="8" y="20" width="1" height="2" fill="#9cdcfe" opacity="0.33"/><rect x="9" y="20" width="1" height="2" fill="#9cdcfe" opacity="0.33"/><rect x="10" y="20" width="1" height="2" fill="#9cdcfe" opacity="0.33"/><rect x="11" y="20" width="1" height="2" fill="#9cdcfe" opacity="0.33"/><rect x="12" y="20" width="1" height="2" fill="#d4d4d4" opacity="0.33"/><rect x="14" y="20" width="1" height="2" fill="#d4d4d4" opacity="0.33"/><rect x="4" y="22" width="1" height="2" fill="#d4d4d4" opacity="0.33"/><rect x="6" y="24" width="1" height="2" fill="#9cdcfe" opacity="0.33"/><rect x="7" y="24" width="1" height="2" fill="#9cdcfe" opacity="0.33"/><rect x="8" y="24" width="1" height="2" fill="#9cdcfe" opacity="0.33"/><rect x="9" y="24" width="1" height="2" fill="#9cdcfe" opacity="0.33"/><rect x="10" y="24" width="1" height="2" fill="#9cdcfe" opacity="0.33"/><rect x="11" y="24" width="1" height="2" fill="#9cdcfe" opacity="0.33"/><rect x="12" y="24" width="1" height="2" fill="#d4d4d4" opacity="0.33"/><rect x="14" y="24" width="1" height="2" fill="#ce9178" opacity="0.33"/><rect x="15" y="24" width="1" height="2" fill="#ce9178" opacity="0.33"/><rect x="16" y="24" width="1" height="2" fill="#ce9178" opacity="0.33"/><rect x="17" y="24" width="1" height="2" fill="#ce9178" opacity="0.33"/><rect x="18" y="24" width="1" height="2" fill="#ce9178" opacity="0.33"/><rect x="19" y="24" width="1" height="2" fill="#ce9178" opacity="0.33"/><rect x="20" y="24" width="1" height="2" fill="#ce9178" opacity="0.33"/><rect x="21" y="24" width="1" height="2" fill="#ce9178" opacity="0.33"/><rect x="22" y="24" width="1" height="2" fill="#ce9178" opacity="0.33"/><rect x="23" y="24" width="1" height="2" fill="#ce9178" opacity="0.33"/><rect x="24" y="24" width="1" height="2" fill="#ce9178" opacity="0.33"/><rect x="25" y="24" width="1" height="2" fill="#ce9178" opacity="0.33"/><rect x="4" y="26" width="1" height="2" fill="#d4d4d4" opacity="0.33"/><rect x="5" y="26" width="1" height="2" fill="#d4d4d4" opacity="0.33"/><rect x="4" y="28" width="1" height="2" fill="#d4d4d4" opacity="0.33"/><rect x="6" y="30" width="1" height="2" fill="#9cdcfe" opacity="0.33"/><rect x="7" y="30" width="1" height="2" fill="#9cdcfe" opacity="0.33"/><rect x="8" y="30" width="1" height="2" fill="#9cdcfe" opacity="0.33"/><rect x="9" y="30" width="1" height="2" fill="#9cdcfe" opacity="0.33"/><rect x="10" y="30" width="1" height="2" fill="#9cdcfe" opacity="0.33"/><rect x="11" y="30" width="1" height="2" fill="#9cdcfe" opacity="0.33"/><rect x="12" y="30" width="1" height="2" fill="#d4d4d4" opacity="0.33"/><rect x="14" y="30" width="1" height="2" fill="#ce9178" opacity="0.33"/><rect x="15" y="30" width="1" height="2" fill="#ce9178" opacity="0.33"/><rect x="16" y="30" width="1" height="2" fill="#ce9178" opacity="0.33"/><rect x="17" y="30" width="1" height="2" fill="#ce9178" opacity="0.33"/><rect x="18" y="30" width="1" height="2" fill="#ce9178" opacity="0.33"/><rect x="19" y="30" width="1" height="2" fill="#ce9178" opacity="0.33"/><rect x="20" y="30" width="1" height="2" fill="#ce9178" opacity="0.33"/><rect x="21" y="30" width="1" height="2" fill="#ce9178" opacity="0.33"/><rect x="22" y="30" width="1" height="2" fill="#ce9178" opacity="0.33"/><rect x="23" y="30" width="1" height="2" fill="#ce9178" opacity="0.33"/><rect x="24" y="30" width="1" height="2" fill="#ce9178" opacity="0.33"/><rect x="25" y="30" width="1" height="2" fill="#ce9178" opacity="0.33"/><rect x="26" y="30" width="1" height="2" fill="#ce9178" opacity="0.33"/><rect x="27" y="30" width="1" height="2" fill="#ce9178" opacity="0.33"/><rect x="28" y="30" width="1" height="2" fill="#ce9178" opacity="0.33"/><rect x="4" y="32" width="1" height="2" fill="#d4d4d4" opacity="0.33"/><rect x="2" y="34" width="1" height="2" fill="#d4d4d4" opacity="0.33"/><rect x="3" y="34" width="1" height="2" fill="#d4d4d4" opacity="0.33"/><rect x="2" y="36" width="1" height="2" fill="#9cdcfe" opacity="0.33"/><rect x="3" y="36" width="1" height="2" fill="#9cdcfe" opacity="0.33"/><rect x="4" y="36" width="1" height="2" fill="#9cdcfe" opacity="0.33"/><rect x="5" y="36" width="1" height="2" fill="#9cdcfe" opacity="0.33"/><rect x="6" y="36" width="1" height="2" fill="#9cdcfe" opacity="0.33"/><rect x="7" y="36" width="1" height="2" fill="#9cdcfe" opacity="0.33"/><rect x="8" y="36" width="1" height="2" fill="#9cdcfe" opacity="0.33"/><rect x="9" y="36" width="1" height="2" fill="#9cdcfe" opacity="0.33"/><rect x="10" y="36" width="1" height="2" fill="#d4d4d4" opacity="0.33"/><rect x="12" y="36" width="1" height="2" fill="#d4d4d4" opacity="0.33"/><rect x="4" y="38" width="1" height="2" fill="#9cdcfe" opacity="0.33"/><rect x="5" y="38" width="1" height="2" fill="#9cdcfe" opacity="0.33"/><rect x="6" y="38" width="1" height="2" fill="#9cdcfe" opacity="0.33"/><rect x="7" y="38" width="1" height="2" fill="#9cdcfe" opacity="0.33"/><rect x="8" y="38" width="1" height="2" fill="#9cdcfe" opacity="0.33"/><rect x="9" y="38" width="1" height="2" fill="#9cdcfe" opacity="0.33"/><rect x="10" y="38" width="1" height="2" fill="#9cdcfe" opacity="0.33"/><rect x="11" y="38" width="1" height="2" fill="#9cdcfe" opacity="0.33"/><rect x="12" y="38" width="1" height="2" fill="#9cdcfe" opacity="0.33"/><rect x="13" y="38" width="1" height="2" fill="#9cdcfe" opacity="0.33"/><rect x="14" y="38" width="1" height="2" fill="#d4d4d4" opacity="0.33"/><rect x="16" y="38" width="1" height="2" fill="#ce9178" opacity="0.33"/><rect x="17" y="38" width="1" height="2" fill="#ce9178" opacity="0.33"/><rect x="18" y="38" width="1" height="2" fill="#ce9178" opacity="0.33"/><rect x="19" y="38" width="1" height="2" fill="#ce9178" opacity="0.33"/><rect x="20" y="38" width="1" height="2" fill="#ce9178" opacity="0.33"/><rect x="21" y="38" width="1" height="2" fill="#d4d4d4" opacity="0.33"/><rect x="4" y="40" width="1" height="2" fill="#9cdcfe" opacity="0.33"/><rect x="5" y="40" width="1" height="2" fill="#9cdcfe" opacity="0.33"/><rect x="6" y="40" width="1" height="2" fill="#9cdcfe" opacity="0.33"/><rect x="7" y="40" width="1" height="2" fill="#9cdcfe" opacity="0.33"/><rect x="8" y="40" width="1" height="2" fill="#9cdcfe" opacity="0.33"/><rect x="9" y="40" width="1" height="2" fill="#9cdcfe" opacity="0.33"/><rect x="10" y="40" width="1" height="2" fill="#9cdcfe" opacity="0.33"/><rect x="11" y="40" width="1" height="2" fill="#9cdcfe" opacity="0.33"/><rect x="12" y="40" width="1" height="2" fill="#9cdcfe" opacity="0.33"/><rect x="13" y="40" width="1" height="2" fill="#9cdcfe" opacity="0.33"/><rect x="14" y="40" width="1" height="2" fill="#9cdcfe" opacity="0.33"/><rect x="15" y="40" width="1" height="2" fill="#9cdcfe" opacity="0.33"/><rect x="16" y="40" width="1" height="2" fill="#9cdcfe" opacity="0.33"/><rect x="17" y="40" width="1" height="2" fill="#d4d4d4" opacity="0.33"/><rect x="19" y="40" width="1" height="2" fill="#b5cea8" opacity="0.33"/><rect x="20" y="40" width="1" height="2" fill="#b5cea8" opacity="0.33"/><rect x="21" y="40" width="1" height="2" fill="#b5cea8" opacity="0.33"/><rect x="2" y="42" width="1" height="2" fill="#d4d4d4" opacity="0.33"/><rect x="3" y="42" width="1" height="2" fill="#d4d4d4" opacity="0.33"/><rect x="2" y="44" width="1" height="2" fill="#9cdcfe" opacity="0.33"/><rect x="3" y="44" width="1" height="2" fill="#9cdcfe" opacity="0.33"/><rect x="4" y="44" width="1" height="2" fill="#9cdcfe" opacity="0.33"/><rect x="5" y="44" width="1" height="2" fill="#9cdcfe" opacity="0.33"/><rect x="6" y="44" width="1" height="2" fill="#9cdcfe" opacity="0.33"/><rect x="7" y="44" width="1" height="2" fill="#9cdcfe" opacity="0.33"/><rect x="8" y="44" width="1" height="2" fill="#9cdcfe" opacity="0.33"/><rect x="9" y="44" width="1" height="2" fill="#9cdcfe" opacity="0.33"/><rect x="10" y="44" width="1" height="2" fill="#9cdcfe" opacity="0.33"/><rect x="11" y="44" width="1" height="2" fill="#d4d4d4" opacity="0.33"/><rect x="13" y="44" width="1" height="2" fill="#d4d4d4" opacity="0.33"/><rect x="4" y="46" width="1" height="2" fill="#9cdcfe" opacity="0.33"/><rect x="5" y="46" width="1" height="2" fill="#9cdcfe" opacity="0.33"/><rect x="6" y="46" width="1" height="2" fill="#9cdcfe" opacity="0.33"/><rect x="7" y="46" width="1" height="2" fill="#9cdcfe" opacity="0.33"/><rect x="8" y="46" width="1" height="2" fill="#9cdcfe" opacity="0.33"/><rect x="9" y="46" width="1" height="2" fill="#9cdcfe" opacity="0.33"/><rect x="10" y="46" width="1" height="2" fill="#9cdcfe" opacity="0.33"/><rect x="11" y="46" width="1" height="2" fill="#9cdcfe" opacity="0.33"/><rect x="12" y="46" width="1" height="2" fill="#9cdcfe" opacity="0.33"/><rect x="13" y="46" width="1" height="2" fill="#9cdcfe" opacity="0.33"/><rect x="14" y="46" width="1" height="2" fill="#9cdcfe" opacity="0.33"/><rect x="15" y="46" width="1" height="2" fill="#9cdcfe" opacity="0.33"/><rect x="16" y="46" width="1" height="2" fill="#9cdcfe" opacity="0.33"/><rect x="17" y="46" width="1" height="2" fill="#9cdcfe" opacity="0.33"/><rect x="18" y="46" width="1" height="2" fill="#9cdcfe" opacity="0.33"/><rect x="19" y="46" width="1" height="2" fill="#9cdcfe" opacity="0.33"/><rect x="20" y="46" width="1" height="2" fill="#9cdcfe" opacity="0.33"/><rect x="21" y="46" width="1" height="2" fill="#d4d4d4" opacity="0.33"/><rect x="23" y="46" width="1" height="2" fill="#ce9178" opacity="0.33"/><rect x="24" y="46" width="1" height="2" fill="#ce9178" opacity="0.33"/><rect x="25" y="46" width="1" height="2" fill="#ce9178" opacity="0.33"/><rect x="26" y="46" width="1" height="2" fill="#ce9178" opacity="0.33"/><rect x="27" y="46" width="1" height="2" fill="#ce9178" opacity="0.33"/><rect x="28" y="46" width="1" height="2" fill="#ce9178" opacity="0.33"/><rect x="29" y="46" width="1" height="2" fill="#ce9178" opacity="0.33"/><rect x="30" y="46" width="1" height="2" fill="#ce9178" opacity="0.33"/><rect x="31" y="46" width="1" height="2" fill="#ce9178" opacity="0.33"/><rect x="32" y="46" width="1" height="2" fill="#d4d4d4" opacity="0.33"/><rect x="4" y="48" width="1" height="2" fill="#9cdcfe" opacity="0.33"/><rect x="5" y="48" width="1" height="2" fill="#9cdcfe" opacity="0.33"/><rect x="6" y="48" width="1" height="2" fill="#9cdcfe" opacity="0.33"/><rect x="7" y="48" width="1" height="2" fill="#9cdcfe" opacity="0.33"/><rect x="8" y="48" width="1" height="2" fill="#9cdcfe" opacity="0.33"/><rect x="9" y="48" width="1" height="2" fill="#9cdcfe" opacity="0.33"/><rect x="10" y="48" width="1" height="2" fill="#9cdcfe" opacity="0.33"/><rect x="11" y="48" width="1" height="2" fill="#9cdcfe" opacity="0.33"/><rect x="12" y="48" width="1" height="2" fill="#9cdcfe" opacity="0.33"/><rect x="13" y="48" width="1" height="2" fill="#9cdcfe" opacity="0.33"/><rect x="14" y="48" width="1" height="2" fill="#9cdcfe" opacity="0.33"/><rect x="15" y="48" width="1" height="2" fill="#d4d4d4" opacity="0.33"/><rect x="17" y="48" width="1" height="2" fill="#ce9178" opacity="0.33"/><rect x="18" y="48" width="1" height="2" fill="#ce9178" opacity="0.33"/><rect x="19" y="48" width="1" height="2" fill="#ce9178" opacity="0.33"/><rect x="20" y="48" width="1" height="2" fill="#ce9178" opacity="0.33"/><rect x="21" y="48" width="1" height="2" fill="#ce9178" opacity="0.33"/><rect x="22" y="48" width="1" height="2" fill="#ce9178" opacity="0.33"/><rect x="23" y="48" width="1" height="2" fill="#ce9178" opacity="0.33"/><rect x="24" y="48" width="1" height="2" fill="#ce9178" opacity="0.33"/><rect x="25" y="48" width="1" height="2" fill="#ce9178" opacity="0.33"/><rect x="2" y="50" width="1" height="2" fill="#d4d4d4" opacity="0.33"/><rect x="3" y="50" width="1" height="2" fill="#d4d4d4" opacity="0.33"/><rect x="2" y="52" width="1" height="2" fill="#9cdcfe" opacity="0.33"/><rect x="3" y="52" width="1" height="2" fill="#9cdcfe" opacity="0.33"/><rect x="4" y="52" width="1" height="2" fill="#9cdcfe" opacity="0.33"/><rect x="5" y="52" width="1" height="2" fill="#9cdcfe" opacity="0.33"/><rect x="6" y="52" width="1" height="2" fill="#9cdcfe" opacity="0.33"/><rect x="7" y="52" width="1" height="2" fill="#9cdcfe" opacity="0.33"/><rect x="8" y="52" width="1" height="2" fill="#9cdcfe" opacity="0.33"/><rect x="9" y="52" width="1" height="2" fill="#9cdcfe" opacity="0.33"/><rect x="10" y="52" width="1" height="2" fill="#d4d4d4" opacity="0.33"/><rect x="12" y="52" width="1" height="2" fill="#d4d4d4" opacity="0.33"/><rect x="4" y="54" width="1" height="2" fill="#9cdcfe" opacity="0.33"/><rect x="5" y="54" width="1" height="2" fill="#9cdcfe" opacity="0.33"/><rect x="6" y="54" width="1" height="2" fill="#9cdcfe" opacity="0.33"/><rect x="7" y="54" width="1" height="2" fill="#9cdcfe" opacity="0.33"/><rect x="8" y="54" width="1" height="2" fill="#9cdcfe" opacity="0.33"/><rect x="9" y="54" width="1" height="2" fill="#9cdcfe" opacity="0.33"/><rect x="10" y="54" width="1" height="2" fill="#9cdcfe" opacity="0.33"/><rect x="11" y="54" width="1" height="2" fill="#d4d4d4" opacity="0.33"/><rect x="13" y="54" width="1" height="2" fill="#ce9178" opacity="0.33"/><rect x="14" y="54" width="1" height="2" fill="#ce9178" opacity="0.33"/><rect x="15" y="54" width="1" height="2" fill="#ce9178" opacity="0.33"/><rect x="16" y="54" width="1" height="2" fill="#ce9178" opacity="0.33"/><rect x="17" y="54" width="1" height="2" fill="#ce9178" opacity="0.33"/><rect x="18" y="54" width="1" height="2" fill="#ce9178" opacity="0.33"/><rect x="19" y="54" width="1" height="2" fill="#ce9178" opacity="0.33"/><rect x="20" y="54" width="1" height="2" fill="#ce9178" opacity="0.33"/><rect x="21" y="54" width="1" height="2" fill="#ce9178" opacity="0.33"/><rect x="22" y="54" width="1" height="2" fill="#ce9178" opacity="0.33"/><rect x="23" y="54" width="1" height="2" fill="#ce9178" opacity="0.33"/><rect x="24" y="54" width="1" height="2" fill="#ce9178" opacity="0.33"/><rect x="25" y="54" width="1" height="2" fill="#ce9178" opacity="0.33"/><rect x="26" y="54" width="1" height="2" fill="#d4d4d4" opacity="0.33"/><rect x="4" y="56" width="1" height="2" fill="#9cdcfe" opacity="0.33"/><rect x="5" y="56" width="1" height="2" fill="#9cdcfe" opacity="0.33"/><rect x="6" y="56" width="1" height="2" fill="#9cdcfe" opacity="0.33"/><rect x="7" y="56" width="1" height="2" fill="#9cdcfe" opacity="0.33"/><rect x="8" y="56" width="1" height="2" fill="#9cdcfe" opacity="0.33"/><rect x="9" y="56" width="1" height="2" fill="#9cdcfe" opacity="0.33"/><rect x="10" y="56" width="1" height="2" fill="#9cdcfe" opacity="0.33"/><rect x="11" y="56" width="1" height="2" fill="#d4d4d4" opacity="0.33"/><rect x="13" y="56" width="1" height="2" fill="#d4d4d4" opacity="0.33"/><rect x="6" y="58" width="1" height="2" fill="#9cdcfe" opacity="0.33"/><rect x="7" y="58" width="1" height="2" fill="#9cdcfe" opacity="0.33"/><rect x="8" y="58" width="1" height="2" fill="#9cdcfe" opacity="0.33"/><rect x="9" y="58" width="1" height="2" fill="#9cdcfe" opacity="0.33"/><rect x="10" y="58" width="1" height="2" fill="#9cdcfe" opacity="0.33"/><rect x="11" y="58" width="1" height="2" fill="#9cdcfe" opacity="0.33"/><rect x="12" y="58" width="1" height="2" fill="#9cdcfe" opacity="0.33"/><rect x="13" y="58" width="1" height="2" fill="#9cdcfe" opacity="0.33"/><rect x="14" y="58" width="1" height="2" fill="#9cdcfe" opacity="0.33"/><rect x="15" y="58" width="1" height="2" fill="#9cdcfe" opacity="0.33"/><rect x="16" y="58" width="1" height="2" fill="#9cdcfe" opacity="0.33"/><rect x="17" y="58" width="1" height="2" fill="#9cdcfe" opacity="0.33"/><rect x="18" y="58" width="1" height="2" fill="#9cdcfe" opacity="0.33"/><rect x="19" y="58" width="1" height="2" fill="#d4d4d4" opacity="0.33"/><rect x="21" y="58" width="1" height="2" fill="#d4d4d4" opacity="0.33"/><rect x="8" y="60" width="1" height="2" fill="#9cdcfe" opacity="0.33"/><rect x="9" y="60" width="1" height="2" fill="#9cdcfe" opacity="0.33"/><rect x="10" y="60" width="1" height="2" fill="#9cdcfe" opacity="0.33"/><rect x="11" y="60" width="1" height="2" fill="#9cdcfe" opacity="0.33"/><rect x="12" y="60" width="1" height="2" fill="#9cdcfe" opacity="0.33"/><rect x="13" y="60" width="1" height="2" fill="#9cdcfe" opacity="0.33"/><rect x="14" y="60" width="1" height="2" fill="#9cdcfe" opacity="0.33"/><rect x="15" y="60" width="1" height="2" fill="#9cdcfe" opacity="0.33"/><rect x="16" y="60" width="1" height="2" fill="#9cdcfe" opacity="0.33"/><rect x="17" y="60" width="1" height="2" fill="#9cdcfe" opacity="0.33"/><rect x="18" y="60" width="1" height="2" fill="#9cdcfe" opacity="0.33"/><rect x="19" y="60" width="1" height="2" fill="#d4d4d4" opacity="0.33"/><rect x="21" y="60" width="1" height="2" fill="#ce9178" opacity="0.33"/><rect x="22" y="60" width="1" height="2" fill="#ce9178" opacity="0.33"/><rect x="23" y="60" width="1" height="2" fill="#ce9178" opacity="0.33"/><rect x="24" y="60" width="1" height="2" fill="#ce9178" opacity="0.33"/><rect x="25" y="60" width="1" height="2" fill="#ce9178" opacity="0.33"/><rect x="26" y="60" width="1" height="2" fill="#ce9178" opacity="0.33"/><rect x="27" y="60" width="1" height="2" fill="#ce9178" opacity="0.33"/><rect x="6" y="62" width="1" height="2" fill="#d4d4d4" opacity="0.33"/><rect x="4" y="64" width="1" height="2" fill="#d4d4d4" opacity="0.33"/><rect x="2" y="66" width="1" height="2" fill="#d4d4d4" opacity="0.33"/><rect x="0" y="68" width="1" height="2" fill="#d4d4d4" opacity="0.33"/></svg>
<div class="a" style="left:1441px;top:152px;width:1px;height:858px;background:#2b2b2b;"></div>
<div class="a" style="left:1442px;top:152px;width:13px;height:2px;background:#a0a0a0;"></div>
<div class="a" style="left:1474px;top:106px;font-size:11px;line-height:15px;color:#e7e7e7">用户引导</div>
<div class="a" style="left:1542px;top:106px;font-size:11px;line-height:15px;color:#a0a0a0">运行中的模拟器</div>
<div class="a" style="left:1644px;top:106px;font-size:11px;line-height:15px;color:#a0a0a0">设备管理</div>
<div class="a" style="left:1712px;top:106px;font-size:11px;line-height:15px;color:#a0a0a0">设备管理</div>
<div class="a" style="left:1780px;top:106px;font-size:11px;line-height:15px;color:#a0a0a0">项目管理</div>
<div class="a" style="left:1473px;top:122px;width:48px;height:2px;background:#e7e7e7;"></div>
<svg class="i" style="left:1842px;top:111px;" width="14" height="4" viewBox="0 0 14 4"><circle cx="1.5" cy="2" r="1.1" fill="#cccccc"/><circle cx="6.5" cy="2" r="1.1" fill="#cccccc"/><circle cx="11.5" cy="2" r="1.1" fill="#cccccc"/></svg>
<svg class="i" style="left:1891px;top:107px;" width="12" height="12" viewBox="0 0 12 12"><path d="M1 1 L11 11 M11 1 L1 11" stroke="#cccccc" stroke-width="1.3"/></svg>
<svg class="i" style="left:1869px;top:139px;" width="15" height="15" viewBox="0 0 15 15"><path d="M12.8 5.5 A6 6 0 1 0 13.3 9" fill="none" stroke="#cccccc" stroke-width="1.4"/><path d="M13.3 1.5 V5.8 H9" fill="none" stroke="#cccccc" stroke-width="1.4"/></svg>
<svg class="i" style="left:1666px;top:198px;" width="43" height="43" viewBox="0 0 43 43"><circle cx="21.5" cy="21.5" r="21" fill="#04c616"/><path d="M10.5 22 L18.5 29.5 L32.5 14.5" fill="none" stroke="#caff9e" stroke-width="4"/></svg>
<div class="a" style="left:1623px;top:246px;font-size:13px;line-height:17px;color:#e0e0e0;font-weight:bold">当前项目可以正常启动</div>
<div class="a" style="left:1478px;top:295px;width:3px;height:343px;background:#f28b12;"></div>
<div class="a" style="left:1473px;top:289px;width:13px;height:13px;border-radius:50%;background:#f28b12"></div>
<div class="a" style="left:1473px;top:403px;width:13px;height:13px;border-radius:50%;background:#f28b12"></div>
<div class="a" style="left:1473px;top:517px;width:13px;height:13px;border-radius:50%;background:#f28b12"></div>
<div class="a" style="left:1473px;top:631px;width:13px;height:13px;border-radius:50%;background:#f28b12"></div>
<div class="a" style="left:1503px;top:287px;font-size:14px;line-height:18px;color:#cccccc">1: 检查系统环境</div>
<svg class="i" style="left:1879px;top:289px;" width="15" height="15" viewBox="0 0 15 15"><rect x="0" y="0" width="14.5" height="14.5" rx="2" fill="#1ebd5a"/><path d="M3.2 7.4 L6.2 10.3 L11.5 4.5" fill="none" stroke="#ffffff" stroke-width="1.5"/></svg>
<svg class="i" style="left:1501px;top:321px;" width="8" height="8" viewBox="0 0 8 8"><circle cx="4" cy="4" r="2.6" fill="none" stroke="#cccccc" stroke-width="1.2"/></svg>
<div class="a" style="left:1519px;top:317px;font-size:13px;line-height:16px;color:#cccccc">网络: 已连接</div>
<svg class="i" style="left:1501px;top:341px;" width="8" height="8" viewBox="0 0 8 8"><circle cx="4" cy="4" r="2.6" fill="none" stroke="#cccccc" stroke-width="1.2"/></svg>
<div class="a" style="left:1519px;top:337px;font-size:13px;line-height:16px;color:#cccccc">nodejs: 已安装, v22.16.0</div>
<div class="a" style="left:1503px;top:364px;font-size:14px;line-height:18px;color:#cccccc">系统环境已满足需求</div>
<div class="a" style="left:1503px;top:401px;font-size:14px;line-height:18px;color:#cccccc">2: 安装项目依赖</div>
<svg class="i" style="left:1879px;top:403px;" width="15" height="15" viewBox="0 0 15 15"><rect x="0" y="0" width="14.5" height="14.5" rx="2" fill="#1ebd5a"/><path d="M3.2 7.4 L6.2 10.3 L11.5 4.5" fill="none" stroke="#ffffff" stroke-width="1.5"/></svg>
<svg class="i" style="left:1501px;top:435px;" width="8" height="8" viewBox="0 0 8 8"><circle cx="4" cy="4" r="2.6" fill="none" stroke="#cccccc" stroke-width="1.2"/></svg>
<div class="a" style="left:1519px;top:431px;font-size:13px;line-height:16px;color:#cccccc">node_modules: 已安装</div>
<svg class="i" style="left:1501px;top:455px;" width="8" height="8" viewBox="0 0 8 8"><circle cx="4" cy="4" r="2.6" fill="none" stroke="#cccccc" stroke-width="1.2"/></svg>
<div class="a" style="left:1519px;top:451px;font-size:13px;line-height:16px;color:#cccccc">aiot-toolkit: 已安装, v2.0.4</div>
<div class="a" style="left:1503px;top:478px;font-size:14px;line-height:18px;color:#cccccc">项目依赖已安装</div>
<div class="a" style="left:1503px;top:515px;font-size:14px;line-height:18px;color:#cccccc">3: 初始化模拟器运行环境</div>
<svg class="i" style="left:1879px;top:517px;" width="15" height="15" viewBox="0 0 15 15"><rect x="0" y="0" width="14.5" height="14.5" rx="2" fill="#1ebd5a"/><path d="M3.2 7.4 L6.2 10.3 L11.5 4.5" fill="none" stroke="#ffffff" stroke-width="1.5"/></svg>
<svg class="i" style="left:1501px;top:549px;" width="8" height="8" viewBox="0 0 8 8"><circle cx="4" cy="4" r="2.6" fill="none" stroke="#cccccc" stroke-width="1.2"/></svg>
<div class="a" style="left:1519px;top:545px;font-size:13px;line-height:16px;color:#cccccc">模拟器环境: 已安装</div>
<svg class="i" style="left:1501px;top:569px;" width="8" height="8" viewBox="0 0 8 8"><circle cx="4" cy="4" r="2.6" fill="none" stroke="#cccccc" stroke-width="1.2"/></svg>
<div class="a" style="left:1519px;top:565px;font-size:13px;line-height:16px;color:#cccccc">模拟器实例: 已创建</div>
<div class="a" style="left:1503px;top:592px;font-size:14px;line-height:18px;color:#cccccc">模拟器环境已安装，存在可用的模拟器实例</div>
<div class="a" style="left:1503px;top:629px;font-size:14px;line-height:18px;color:#cccccc">4: 预览项目</div>
<div class="a" style="left:1503px;top:657px;font-size:14px;line-height:18px;color:#cccccc">所有环境都已OK，点击顶部运行或调试按钮并选择模拟器后便可</div>
<div class="a" style="left:1503px;top:677px;font-size:14px;line-height:18px;color:#cccccc">预览项目效果</div>
<div class="a" style="left:1503px;top:778px;width:4px;height:4px;border-radius:50%;background:#cccccc"></div>
<div class="a" style="left:1518px;top:771px;font-size:14px;line-height:18px;color:#3794ff;font-weight:bold;letter-spacing:-0.25px;overflow:hidden;width:284px">Aiot-Toolkit Usage Help Documentation</div>
<div class="a" style="left:1503px;top:801px;width:4px;height:4px;border-radius:50%;background:#cccccc"></div>
<div class="a" style="left:1518px;top:794px;font-size:14px;line-height:18px;color:#3794ff;font-weight:bold;letter-spacing:-0.25px;overflow:hidden;width:284px">Xiaomi Vela JS应用开发和aiot-ide使用帮助手册</div>
<svg class="i" style="left:10px;top:1012px;" width="16" height="18" viewBox="0 0 16 18"><path d="M3 6 L7.2 9.3 L3 12.6 M12 3 L7.7 6.3 L12 9.6" fill="none" stroke="#ffffff" stroke-width="1.1"/></svg>
<svg class="i" style="left:42px;top:1014px;" width="14" height="14" viewBox="0 0 14 14"><circle cx="6.5" cy="6.7" r="5.8" fill="none" stroke="#ffffff" stroke-width="1.1"/><path d="M4.2 4.4 L8.8 9 M8.8 4.4 L4.2 9" stroke="#ffffff" stroke-width="1.1"/></svg>
<div class="a" style="left:59px;top:1014px;font-size:12px;line-height:16px;color:#fff">0</div>
<svg class="i" style="left:69px;top:1013px;" width="14" height="14" viewBox="0 0 14 14"><path d="M7 1.8 L12.8 12.8 H1.2 Z" fill="none" stroke="#ffffff" stroke-width="1.1" stroke-linejoin="round"/><path d="M7 6 V11" stroke="#ffffff" stroke-width="1"/></svg>
<div class="a" style="left:87px;top:1014px;font-size:12px;line-height:16px;color:#fff">1</div>
<div class="a" style="left:109px;top:1014px;font-size:12px;line-height:16px;color:#fff">停止</div>
<div class="a" style="left:1529px;top:1014px;font-size:12px;line-height:16px;color:#fff;letter-spacing:-0.3px">行 1，列 1</div>
<div class="a" style="left:1600px;top:1014px;font-size:12px;line-height:16px;color:#fff">空格: 2</div>
<div class="a" style="left:1654px;top:1014px;font-size:12px;line-height:16px;color:#fff">UTF-8</div>
<div class="a" style="left:1701px;top:1014px;font-size:12px;line-height:16px;color:#fff">LF</div>
<svg class="i" style="left:1725px;top:1015px;" width="15" height="13" viewBox="0 0 15 13"><path d="M6 0.9 Q3.9 0.9 3.9 3 V4.8 Q3.9 6 2.2 6.3 Q3.9 6.6 3.9 7.8 V9.7 Q3.9 11.8 6 11.8 M8.6 0.9 Q10.7 0.9 10.7 3 V4.8 Q10.7 6 12.4 6.3 Q10.7 6.6 10.7 7.8 V9.7 Q10.7 11.8 8.6 11.8" fill="none" stroke="#ffffff" stroke-width="1.8"/></svg>
<div class="a" style="left:1747px;top:1014px;font-size:12px;line-height:16px;color:#fff">JSON</div>
<svg class="i" style="left:1788px;top:1013px;" width="16" height="16" viewBox="0 0 16 16"><path d="M3 6 Q3 2.5 6 2.5 Q8 2.5 8 4.5 Q8 2.5 10 2.5 Q13 2.5 13 6 V7 Q14.5 8 14.5 10 V11 Q14.5 13.5 8 13.5 Q1.5 13.5 1.5 11 V10 Q1.5 8 3 7 Z" fill="none" stroke="#ffffff" stroke-width="1.3"/><rect x="5.5" y="8.5" width="1.5" height="2.5" fill="#ffffff"/><rect x="9" y="8.5" width="1.5" height="2.5" fill="#ffffff"/></svg>
<svg class="i" style="left:1819px;top:1014px;" width="16" height="14" viewBox="0 0 16 14"><path d="M1 8 L4 11 L9.5 3.5 M6.5 11 L14.5 2.5" fill="none" stroke="#ffffff" stroke-width="1.2"/></svg>
<div class="a" style="left:1836px;top:1014px;font-size:12px;line-height:16px;color:#fff">Prettier</div>
<svg class="i" style="left:1891px;top:1013px;" width="16" height="16" viewBox="0 0 16 16"><path d="M4 11 V7 Q4 3 8 3 Q12 3 12 7 V11 L13.5 12.5 H2.5 Z M6.5 13.5 Q8 15 9.5 13.5" fill="none" stroke="#ffffff" stroke-width="1.2"/><circle cx="12.5" cy="3.5" r="2.5" fill="#ffffff"/></svg>
<div class="a" style="left:661px;top:7px;width:601px;height:89px;background:#252526;border-radius:6px;box-shadow:0 0 8px 2px rgba(0,0,0,0.36)"></div>
<div class="a" style="left:667px;top:15px;width:588px;height:27px;background:#3c3c3c;border:1px solid #007acc;border-radius:2px"></div>
<div class="a" style="left:674px;top:20px;width:1px;height:17px;background:#cccccc;"></div>
<div class="a" style="left:675px;top:22px;font-size:13px;line-height:16px;color:#8b8b8b">选择编译模式</div>
<div class="a" style="left:666px;top:46px;width:590px;height:22px;background:#04395e;border-radius:3px"></div>
<div class="a" style="left:677px;top:50px;font-size:13px;line-height:16px;color:#ffffff">默认&nbsp; pages/index</div>
<div class="a" style="left:677px;top:72px;font-size:13px;line-height:16px;color:#cccccc">新增</div>
<div class="badge" style="left:732px;top:78px">2</div>
</body></html>
